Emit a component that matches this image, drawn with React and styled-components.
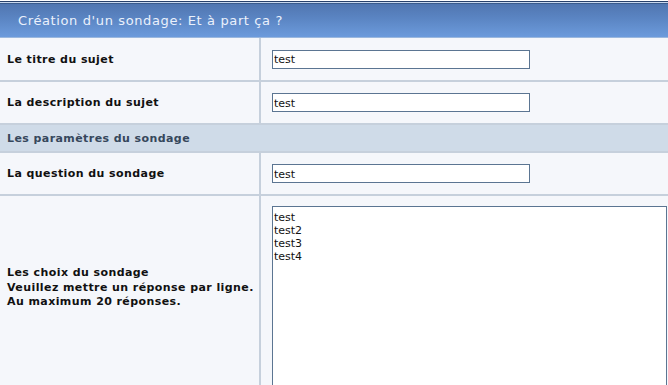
import React from "react";
import styled, { createGlobalStyle } from "styled-components";

const Global = createGlobalStyle`
  html, body { margin: 0; padding: 0; background: #ffffff; }
  body { width: 668px; height: 385px; overflow: hidden; }
`;

const Page = styled.div`
  width: 668px;
  height: 385px;
  overflow: hidden;
  font-family: "DejaVu Sans", Verdana, sans-serif;
  border-top: 1px solid #ffffff;
`;

const TitleBar = styled.div`
  height: 33px;
  border-top: 1px solid #27406a;
  box-shadow: inset 0 1px 0 #c9d8ee, inset 0 2px 0 #3a5c8e;
  border-bottom: 1px solid #9bb8de;
  background: linear-gradient(to bottom, #4f74ae 0%, #5a84c2 45%, #6c9bdc 100%);
  display: flex;
  align-items: center;
  padding: 2px 0 0 18px;
  color: #eaf1fc;
  font-size: 13px;
  letter-spacing: 0.62px;
`;

const Grid = styled.div`
  display: grid;
  grid-template-columns: 259px 1fr;
  background: #c6d0dc;
  row-gap: 2px;
  column-gap: 2px;
`;

const Label = styled.div`
  background: #f5f7fb;
  display: flex;
  flex-direction: column;
  justify-content: ${(p) => (p.$top ? "flex-start" : "center")};
  padding-left: 7px;
  padding-top: ${(p) => (p.$top ? "70px" : "2px")};
  box-sizing: border-box;
  height: ${(p) => p.$h}px;
  font-size: 11px;
  font-weight: bold;
  letter-spacing: 0.42px;
  color: #111111;
  line-height: 14.5px;
`;

const Field = styled.div`
  background: #f5f7fb;
  height: ${(p) => p.$h}px;
  display: flex;
  align-items: ${(p) => (p.$top ? "flex-start" : "center")};
  padding-left: 11px;
  padding-top: ${(p) => (p.$top ? "10px" : "0")};
  box-sizing: border-box;
`;

const Section = styled.div`
  grid-column: 1 / 3;
  background: #cfdbe8;
  height: 26px;
  display: flex;
  align-items: center;
  padding-left: 7px;
  font-size: 11px;
  font-weight: bold;
  letter-spacing: 0.42px;
  color: #36475c;
`;

const TextInput = styled.input`
  box-sizing: border-box;
  width: 258px;
  height: 19px;
  border: 1px solid #5b7592;
  background: #ffffff;
  padding: 1px 1px 0;
  font-family: "DejaVu Sans", Tahoma, sans-serif;
  font-size: 11px;
  color: #111111;
  outline: none;
`;

const TextArea = styled.textarea`
  box-sizing: border-box;
  width: 395px;
  height: 180px;
  border: 1px solid #5b7592;
  background: #ffffff;
  padding: 4px 1px 2px;
  font-family: "DejaVu Sans", Tahoma, sans-serif;
  font-size: 11px;
  line-height: 13px;
  color: #111111;
  resize: none;
  outline: none;
  overflow: hidden;
`;

export default function App() {
  return (
    <Page>
      <Global />
      <TitleBar>Création d'un sondage: Et à part ça ?</TitleBar>
      <Grid>
        <Label $h={42}>Le titre du sujet</Label>
        <Field $h={42}>
          <TextInput defaultValue="test" />
        </Field>
        <Label $h={41}>La description du sujet</Label>
        <Field $h={41}>
          <TextInput defaultValue="test" />
        </Field>
        <Section>Les paramètres du sondage</Section>
        <Label $h={41}>La question du sondage</Label>
        <Field $h={41}>
          <TextInput defaultValue="test" />
        </Field>
        <Label $h={200} $top>
          <span>Les choix du sondage</span>
          <span>Veuillez mettre un réponse par ligne.</span>
          <span>Au maximum 20 réponses.</span>
        </Label>
        <Field $h={200} $top>
          <TextArea defaultValue={"test\ntest2\ntest3\ntest4"} />
        </Field>
      </Grid>
    </Page>
  );
}
